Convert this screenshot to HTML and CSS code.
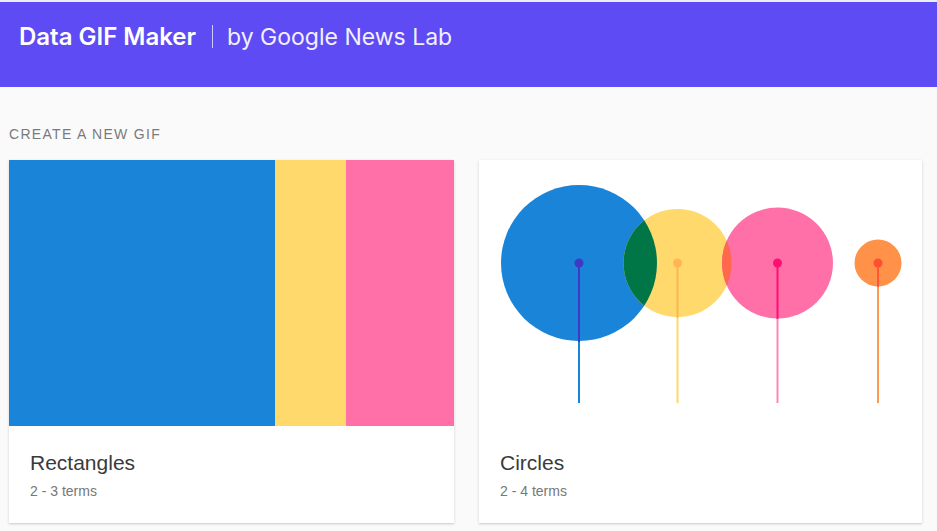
FILE: index.html
```html
<!DOCTYPE html>
<html>
<head>
<meta charset="utf-8">
<link rel="stylesheet" href="styles.css">
</head>
<body>
<header class="topbar">
  <span class="brand">Data GIF Maker</span>
  <span class="sep"></span>
  <span class="byline">by Google News Lab</span>
</header>
<main class="content">
  <h2 class="section-label">CREATE A NEW GIF</h2>
  <div class="cards">
    <div class="card">
      <div class="thumb rects">
        <div class="r r-blue"></div>
        <div class="r r-yellow"></div>
        <div class="r r-pink"></div>
      </div>
      <div class="card-body">
        <div class="card-title">Rectangles</div>
        <div class="card-sub">2 - 3 terms</div>
      </div>
    </div>
    <div class="card">
      <div class="thumb">
        <svg class="circles" width="443" height="266" viewBox="0 0 443 266">
          <defs>
            <clipPath id="clipBlue"><circle cx="100" cy="103" r="78"/></clipPath>
            <clipPath id="clipPink"><circle cx="298.5" cy="103" r="55.5"/></clipPath>
          </defs>
          <circle cx="100" cy="103" r="78" fill="#1a85d8"/>
          <circle cx="198.5" cy="103" r="54" fill="#ffd96b"/>
          <circle cx="298.5" cy="103" r="55.5" fill="#ff6fa8"/>
          <circle cx="399" cy="103" r="23.5" fill="#ff9148"/>
          <circle cx="198.5" cy="103" r="54" fill="#007646" clip-path="url(#clipBlue)"/>
          <circle cx="198.5" cy="103" r="54" fill="#ff684c" clip-path="url(#clipPink)"/>
          <line x1="100" y1="103" x2="100" y2="182" stroke="#3e3ac6" stroke-width="2"/>
          <line x1="100" y1="182" x2="100" y2="243" stroke="#1a85d8" stroke-width="2"/>
          <circle cx="100" cy="103" r="4.5" fill="#3e3ac6"/>
          <line x1="198.5" y1="103" x2="198.5" y2="158" stroke="#ffb650" stroke-width="2"/>
          <line x1="198.5" y1="158" x2="198.5" y2="243" stroke="#ffd96b" stroke-width="2"/>
          <circle cx="198.5" cy="103" r="4.5" fill="#ffb650"/>
          <line x1="298.5" y1="103" x2="298.5" y2="159" stroke="#ff0f72" stroke-width="2"/>
          <line x1="298.5" y1="159" x2="298.5" y2="243" stroke="#ff86b6" stroke-width="2"/>
          <circle cx="298.5" cy="103" r="4.5" fill="#ff0f72"/>
          <line x1="399" y1="103" x2="399" y2="127" stroke="#ff5634" stroke-width="2"/>
          <line x1="399" y1="127" x2="399" y2="243" stroke="#ff9a50" stroke-width="2"/>
          <circle cx="399" cy="103" r="4.5" fill="#ff4f30"/>
        </svg>
      </div>
      <div class="card-body">
        <div class="card-title">Circles</div>
        <div class="card-sub">2 - 4 terms</div>
      </div>
    </div>
  </div>
</main>
</body>
</html>
```

FILE: styles.css
```css
html, body {
  margin: 0;
  padding: 0;
}
body {
  background: #fafafa;
  font-family: "Liberation Sans", Arial, sans-serif;
  width: 937px;
  height: 531px;
  overflow: hidden;
  border-top: 2px solid #eeeef6;
  box-sizing: border-box;
}
.topbar {
  height: 85px;
  background: #5f4bf3;
  display: flex;
  align-items: center;
  padding: 0 0 16px 19px;
  box-sizing: border-box;
  color: #fff;
}
.brand {
  font-family: Inter, "Open Sans", sans-serif;
  font-weight: 600;
  font-size: 24px;
  letter-spacing: 0;
}
.sep {
  width: 1px;
  height: 23px;
  background: rgba(255,255,255,0.7);
  margin: 0 14px 0 16px;
}
.byline {
  font-family: Inter, "Open Sans", sans-serif;
  font-weight: 400;
  font-size: 23px;
  color: #f2f0ff;
}
.content {
  padding: 0 15px 0 9px;
}
.section-label {
  margin: 0;
  padding-top: 39px;
  height: 73px;
  box-sizing: border-box;
  font-size: 14px;
  font-weight: 400;
  letter-spacing: 1.3px;
  color: #7a7a7a;
  line-height: 16px;
}
.cards {
  display: grid;
  grid-template-columns: 445px 443px;
  gap: 25px;
}
.card {
  background: #fff;
  height: 363px;
  box-shadow: 0 1px 3px rgba(0,0,0,0.14), 0 1px 1px rgba(0,0,0,0.06);
  display: flex;
  flex-direction: column;
}
.thumb {
  height: 266px;
  overflow: hidden;
}
.rects {
  display: flex;
}
.r { height: 100%; }
.r-blue { width: 266px; background: #1a85d8; }
.r-yellow { width: 71px; background: #ffd96b; }
.r-pink { flex: 1; background: #ff6fa8; }
.circles { display: block; }
.card-body {
  padding: 25px 21px 0;
}
.card-title {
  font-size: 21px;
  color: #3a3a3a;
  line-height: 24px;
}
.card-sub {
  margin-top: 8px;
  font-size: 14px;
  color: #777;
  line-height: 16px;
}
```
